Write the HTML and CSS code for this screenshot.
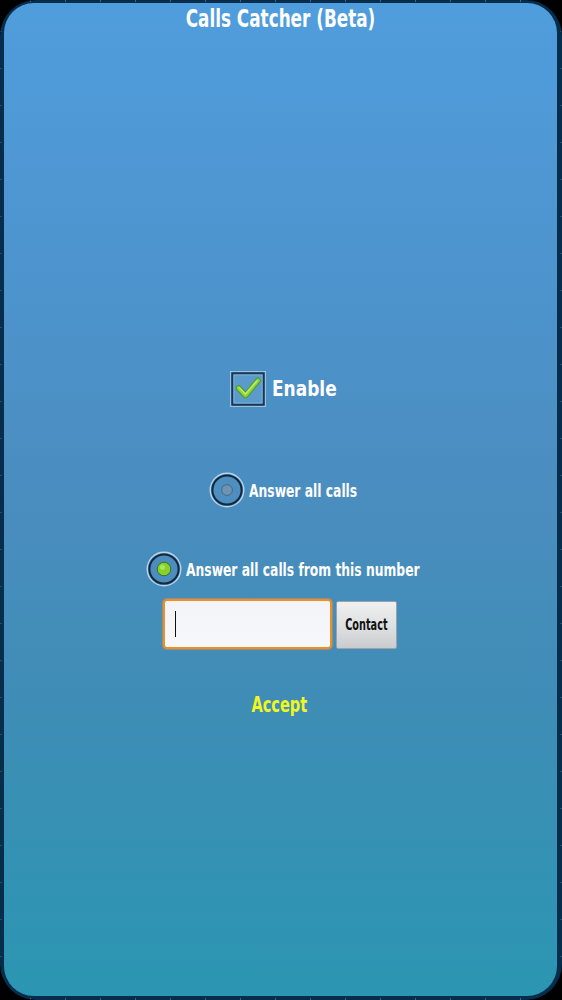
FILE: index.html
```html
<!DOCTYPE html>
<html>
<head>
<meta charset="utf-8">
<link rel="stylesheet" href="styles.css">
</head>
<body>
<div class="frame">
  <div class="panel">
    <h1 class="title"><span class="squeeze">Calls Catcher (Beta)</span></h1>
    <div class="content">
      <div class="row enable-row">
        <svg class="checkbox" width="36" height="36" viewBox="0 0 36 36">
          <rect x="0.75" y="0.75" width="34.5" height="34.5" fill="none" stroke="#9fc3df" stroke-width="1.5"/>
          <rect x="2.25" y="2.25" width="31.5" height="31.5" fill="#5a9bcb" stroke="#1c3550" stroke-width="2"/>
          <rect x="4" y="4" width="28" height="28" fill="none" stroke="#7db3da" stroke-width="0.8"/>
          <path d="M8.5 17 L15.5 24.5 L28 9.5" fill="none" stroke="#4f9a1c" stroke-width="5.5" stroke-linecap="round" stroke-linejoin="round"/>
          <path d="M8.5 17 L15.5 24.5 L28 9.5" fill="none" stroke="#8fd43a" stroke-width="3.6" stroke-linecap="round" stroke-linejoin="round"/>
          <path d="M9.5 16.8 L15.5 23 L27 9.8" fill="none" stroke="#c2ef7a" stroke-width="1.2" stroke-linecap="round" stroke-linejoin="round"/>
        </svg>
        <span class="enable-label">Enable</span>
      </div>

      <div class="row radio-row first">
        <svg class="radio" width="36" height="36" viewBox="0 0 36 36">
          <circle cx="18" cy="18" r="16.8" fill="#4f8fc2" stroke="#b9d4ea" stroke-width="1.4"/>
          <circle cx="18" cy="18" r="14.6" fill="#4d8fc1" stroke="#15283a" stroke-width="2"/>
          <circle cx="18" cy="18" r="5.4" fill="#6f93b1" stroke="#41698b" stroke-width="1"/>
        </svg>
        <span class="radio-label short">Answer all calls</span>
      </div>

      <div class="row radio-row second">
        <svg class="radio" width="36" height="36" viewBox="0 0 36 36">
          <circle cx="18" cy="18" r="16.8" fill="#4d8ebf" stroke="#b9d4ea" stroke-width="1.4"/>
          <circle cx="18" cy="18" r="14.6" fill="#4b8dbe" stroke="#15283a" stroke-width="2"/>
          <circle cx="18" cy="18" r="6.8" fill="#86d12a" stroke="#3f6e2c" stroke-width="1"/>
          <circle cx="16.5" cy="16.3" r="2.6" fill="#b6ec67" opacity="0.7"/>
        </svg>
        <span class="radio-label long">Answer all calls from this number</span>
      </div>

      <div class="row input-row">
        <div class="number-input"><span class="caret"></span></div>
        <div class="contact-btn"><span class="contact-text">Contact</span></div>
      </div>

      <div class="accept"><span class="squeeze-accept">Accept</span></div>
    </div>
  </div>
</div>
</body>
</html>
```

FILE: styles.css
```css
html, body {
  margin: 0;
  padding: 0;
  background: #000;
}
body {
  width: 562px;
  height: 1000px;
  overflow: hidden;
  font-family: "DejaVu Sans Condensed", "DejaVu Sans", sans-serif;
  font-weight: bold;
}
.frame {
  width: 562px;
  height: 1000px;
  box-sizing: border-box;
  padding: 3px 5px 4px 4px;
  border-radius: 36px;
  background-color: #062d4b;
  background-image:
    repeating-linear-gradient(90deg, transparent 0 30px, rgba(130,175,210,0.45) 30px 31px, transparent 31px 35px),
    repeating-linear-gradient(90deg, transparent 0 30px, rgba(130,175,210,0.45) 30px 31px, transparent 31px 35px),
    repeating-linear-gradient(180deg, transparent 0 31px, rgba(130,175,210,0.25) 31px 32px, transparent 32px 37px),
    repeating-linear-gradient(180deg, transparent 0 31px, rgba(130,175,210,0.25) 31px 32px, transparent 32px 37px);
  background-size: 100% 2px, 100% 2px, 2px 100%, 2px 100%;
  background-position: 0 0, 0 100%, 0 0, 100% 0;
  background-repeat: no-repeat;
}
.panel {
  height: 100%;
  border-radius: 30px;
  background: linear-gradient(180deg, #509ddd 0%, #4d93cc 30%, #4a8dbf 50%, #3f8db6 70%, #2b96b2 100%);
  display: flex;
  flex-direction: column;
  align-items: center;
  color: #fff;
}
.title {
  margin: 2px 0 0;
  font-size: 24px;
  line-height: 28px;
  font-weight: bold;
  text-align: center;
}
.squeeze {
  display: inline-block;
  transform: scaleX(0.78);
  transform-origin: center;
}
.content {
  display: flex;
  flex-direction: column;
  align-items: center;
  margin-top: 337px;
  padding-left: 4px;
}
.row {
  display: flex;
  align-items: center;
}
.enable-row {
  gap: 6px;
  height: 38px;
  margin-left: 2px;
}
.checkbox { display: block; }
.enable-label {
  display: inline-block;
  font-size: 21px;
  transform: scaleX(0.9);
  transform-origin: left center;
  margin-right: -7px;
}
.radio-row {
  gap: 4px;
  height: 36px;
}
.radio-row.first { margin-top: 64px; }
.radio-row.second { margin-top: 43px; }
.radio { display: block; }
.radio-label {
  display: inline-block;
  font-size: 17.8px;
  transform: scaleX(0.77);
  transform-origin: left center;
}
.radio-label.short { margin-right: -33px; }
.radio-label.long { margin-right: -71px; }
.input-row {
  margin-top: 12px;
  gap: 4px;
  margin-left: -5px;
  align-items: flex-start;
}
.number-input {
  width: 155px;
  height: 46px;
  border: 2.5px solid #ec8e2a;
  border-radius: 4px;
  background: linear-gradient(180deg, #f2f4f8, #f6f8fb);
  box-shadow: 0 0 1px 1px rgba(240,150,60,0.5);
  display: flex;
  align-items: center;
  padding-left: 10px;
}
.caret {
  width: 1.5px;
  height: 26px;
  background: #111;
}
.contact-btn {
  margin-top: 2px;
  width: 61px;
  height: 48px;
  box-sizing: border-box;
  border: 1px solid #9aa3ab;
  border-radius: 2px;
  background: linear-gradient(180deg, #f0f0f0 0%, #dcdddf 60%, #c9cbce 100%);
  color: #111;
  display: flex;
  align-items: center;
  justify-content: center;
}
.contact-text {
  display: inline-block;
  font-size: 15px;
  transform: scaleX(0.72);
  transform-origin: center;
}
.accept {
  margin-top: 43px;
  color: #f2f61f;
  font-size: 20.5px;
  line-height: 26px;
  margin-left: -6px;
}
.squeeze-accept {
  display: inline-block;
  transform: scaleX(0.79);
  transform-origin: center;
}
```
